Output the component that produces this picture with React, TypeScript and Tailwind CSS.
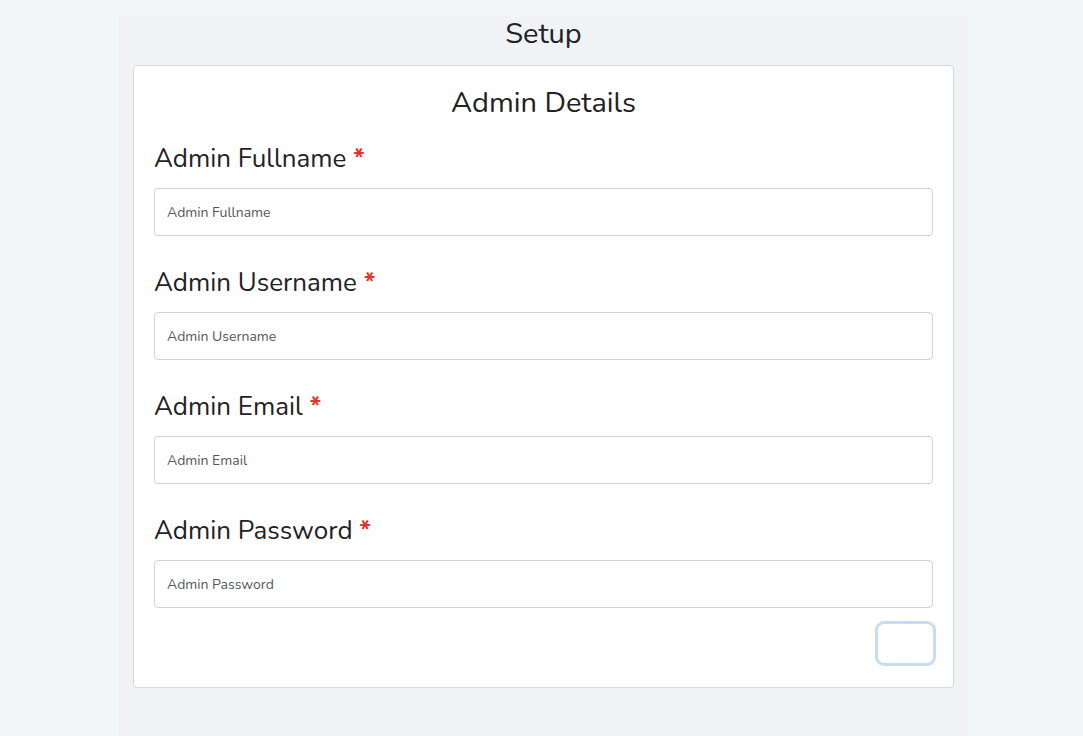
import React from 'react';

const fields = ['Admin Fullname', 'Admin Username', 'Admin Email', 'Admin Password'];

const Field = ({ label }: { label: string }) => (
  <div className="mb-[30px] last:mb-0">
    <label className="block h-[32px] text-[26px] leading-[34px] text-[#1f2326]">
      {label} <span className="font-bold text-[#e3342f]">*</span>
    </label>
    <input
      type={label === 'Admin Password' ? 'password' : 'text'}
      placeholder={label}
      className="mt-[14px] block h-[48px] w-full rounded-[4px] border border-[#ced4da] bg-white px-[12px] text-[14px] text-[#495057] outline-none placeholder:text-[#50575e]"
    />
  </div>
);

const App = () => {
  return (
    <div
      className="min-h-[736px] bg-[#f3f6f9] pt-[15px]"
      style={{ fontFamily: '"Nunito", "Open Sans", "Noto Sans", sans-serif' }}
    >
      <div className="ml-[118px] min-h-[721px] w-[851px] bg-[#f0f2f6] px-[15px]">
        <h1 className="h-[36px] text-center text-[29px] leading-[38px] text-[#1f2326]">Setup</h1>
        <div className="mt-[14px] rounded-[4px] border border-[#d6d8db] bg-white px-[20px] pb-[21px] pt-[18px]">
          <h2 className="h-[36px] text-center text-[29px] leading-[38px] text-[#1f2326]">Admin Details</h2>
          <div className="mt-[22px]">
            {fields.map((f) => (
              <Field key={f} label={f} />
            ))}
          </div>
          <div className="mt-[13px] flex justify-end">
            <button className="-mr-[3px] h-[45px] w-[61px] rounded-[9px] border-[3px] border-[#c4ddf2] bg-white" />
          </div>
        </div>
      </div>
    </div>
  );
};

export default App;
